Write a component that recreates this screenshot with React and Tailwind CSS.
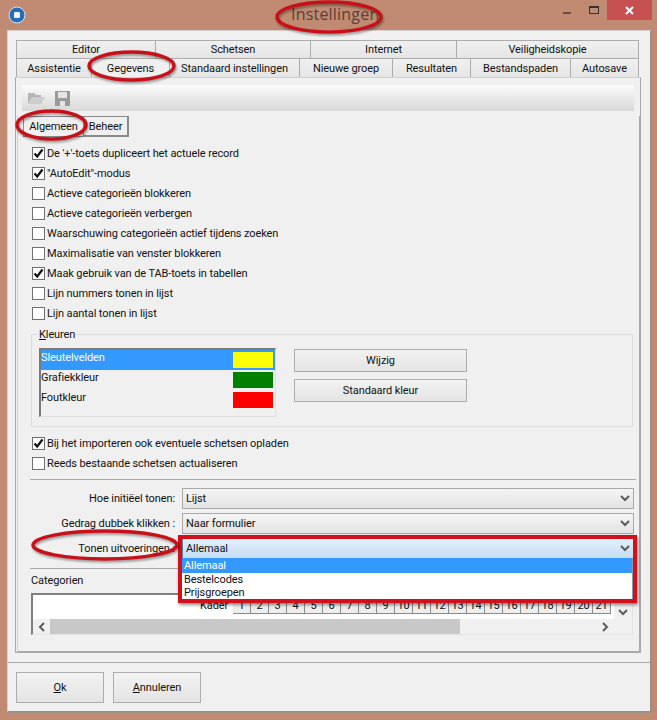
const topTabs = [
  { label: "Editor", w: "w-[140px]" },
  { label: "Schetsen", w: "w-[155px]" },
  { label: "Internet", w: "w-[146px]" },
  { label: "Veiligheidskopie", w: "w-[182px]" },
];

const bottomTabs = [
  { label: "Assistentie", w: "w-[76px]" },
  { label: "Gegevens", w: "w-[78px]", active: true },
  { label: "Standaard instellingen", w: "w-[130px]" },
  { label: "Nieuwe groep", w: "w-[93px]" },
  { label: "Resultaten", w: "w-[78px]" },
  { label: "Bestandspaden", w: "w-[100px]" },
  { label: "Autosave", w: "w-[68px]" },
];

const options = [
  { label: "De '+'-toets dupliceert het actuele record", checked: true },
  { label: '"AutoEdit"-modus', checked: true },
  { label: "Actieve categorieën blokkeren" },
  { label: "Actieve categorieën verbergen" },
  { label: "Waarschuwing categorieën actief tijdens zoeken" },
  { label: "Maximalisatie van venster blokkeren" },
  { label: "Maak gebruik van de TAB-toets in tabellen", checked: true },
  { label: "Lijn nummers tonen in lijst" },
  { label: "Lijn aantal tonen in lijst" },
];

const colors = [
  { label: "Sleutelvelden", swatch: "bg-[#ffff00]", selected: true },
  { label: "Grafiekkleur", swatch: "bg-[#008000]" },
  { label: "Foutkleur", swatch: "bg-[#ff0000]" },
];

const kaderCells = Array.from({ length: 21 }, (_, i) => i + 1);

const Chevron = ({ dir = "down" }) => {
  const points = {
    down: "1,2 5,6 9,2",
    left: "7,1 3,5 7,9",
    right: "3,1 7,5 3,9",
  };
  return (
    <svg width="10" height="10" viewBox="0 0 10 10" fill="none" className="shrink-0">
      <polyline points={points[dir]} stroke="#5c5c5c" strokeWidth="2" />
    </svg>
  );
};

const Check = ({ checked, label }) => (
  <div className="h-5 flex items-center gap-[2px]">
    <span className="w-[13px] h-[13px] border border-[#707070] bg-white flex items-center justify-center shrink-0">
      {checked && (
        <svg width="11" height="11" viewBox="0 0 11 11" fill="none">
          <polyline points="1.5,5.5 4.2,8.5 9.5,1.5" stroke="#111" strokeWidth="2.2" />
        </svg>
      )}
    </span>
    <span>{label}</span>
  </div>
);

const SelectRow = ({ label, value, hot }) => (
  <div className="h-[25px] flex items-start">
    <span className="w-[146px] h-5 pr-[1px] flex items-center justify-end whitespace-nowrap">{label}</span>
    <div
      className={`ml-[6px] w-[452px] h-[21px] border flex items-center justify-between pl-[3px] pr-[3px] ${
        hot
          ? "border-[#5f87ad] bg-gradient-to-b from-[#e3f0fb] to-[#c4dcf4]"
          : "border-[#a9a9a9] bg-gradient-to-b from-[#f4f4f4] to-[#e3e3e3]"
      }`}
    >
      <span>{value}</span>
      <Chevron />
    </div>
  </div>
);

const Oval = ({ className, vb }) => (
  <svg
    className={`absolute pointer-events-none drop-shadow-[1px_2px_1px_rgba(0,0,0,0.35)] ${className}`}
    viewBox={`0 0 ${vb[0]} ${vb[1]}`}
    fill="none"
  >
    <ellipse cx={vb[0] / 2} cy={vb[1] / 2} rx={vb[0] / 2 - 2} ry={vb[1] / 2 - 2} stroke="#c8101a" strokeWidth="3.5" />
  </svg>
);

const App = () => {
  return (
    <div className="relative w-[657px] h-[720px] overflow-hidden bg-[#c08b72] text-[11px] tracking-[-0.1px] leading-none text-[#111] font-['Roboto',Arial,sans-serif]">
      {/* title bar */}
      <div className="relative h-[30px] flex items-start">
        <svg width="18" height="18" viewBox="0 0 18 18" className="ml-[8px] mt-[6px]">
          <circle cx="9" cy="9" r="8" fill="#2a6db5" />
          <circle cx="9" cy="9" r="8" fill="none" stroke="#cfe3f5" strokeWidth="1" />
          <rect x="6" y="6" width="6" height="6" rx="1" fill="#eaf4ff" />
        </svg>
        <span className="absolute left-[291px] top-[5px] text-[16px] tracking-[0.2px] leading-[18px] text-[#5b4038] font-['Open_Sans',sans-serif]">
          Instellingen
        </span>
        <div className="ml-auto mr-[5px] flex items-start">
          <div className="w-[28px] h-[20px] flex items-center justify-center">
            <span className="w-[8px] h-[2px] mt-[6px] bg-[#6b5048]" />
          </div>
          <div className="w-[26px] h-[20px] flex items-center justify-center">
            <span className="w-[10px] h-[8px] border border-[#333] border-t-2" />
          </div>
          <div className="w-[45px] h-[20px] bg-[#c75050] flex items-center justify-center">
            <svg width="9" height="9" viewBox="0 0 9 9">
              <path d="M1 1 L8 8 M8 1 L1 8" stroke="#fff" strokeWidth="2" />
            </svg>
          </div>
        </div>
      </div>

      {/* window body */}
      <div className="ml-[7px] w-[645px] h-[683px] bg-[#f0f0f0] border-t border-l border-[#d8d0cc] border-r-2 border-b-2 border-r-[#9c8f88] border-b-[#9c8f88] flex flex-col">
        <div className="pl-[8px] pt-[9px]">
          <div className="flex h-[19px]">
            {topTabs.map((t) => (
              <div
                key={t.label}
                className={`${t.w} border border-[#acacac] border-l-0 first:border-l bg-gradient-to-b from-[#f0f0f0] to-[#e5e5e5] flex items-center justify-center`}
              >
                {t.label}
              </div>
            ))}
          </div>
          <div className="flex h-[19px]">
            {bottomTabs.map((t) => (
              <div
                key={t.label}
                className={`${t.w} border-r border-b border-[#acacac] first:border-l flex items-center justify-center ${
                  t.active ? "bg-[#f0f0f0] border-b-0" : "bg-gradient-to-b from-[#f0f0f0] to-[#e5e5e5] pt-[1px]"
                }`}
              >
                {t.label}
              </div>
            ))}
          </div>
        </div>

        {/* tab panel */}
        <div className="ml-[7px] w-[626px] h-[576px] -mt-[1px] border border-[#a9a9a9] border-t-[#d0d0d0] pt-[7px] flex flex-col">
          <div className="mx-[6px] h-[26px] shrink-0 bg-gradient-to-b from-[#fbfbfb] to-[#d8d8d8] flex items-center gap-[10px] pl-[5px]">
            <svg width="18" height="14" viewBox="0 0 18 14">
              <path d="M1 2 H7 L9 4 H14 V6 H5 L1 13 Z" fill="#b4b4b4" />
              <path d="M5 6 H18 L14 13 H1 Z" fill="#cdcdcd" />
            </svg>
            <svg width="15" height="15" viewBox="0 0 15 15">
              <rect width="15" height="15" fill="#9a9a9a" />
              <rect x="3" y="1" width="9" height="6" fill="#e4e4e4" />
              <rect x="5" y="10" width="5" height="5" fill="#e4e4e4" />
            </svg>
          </div>

          <div className="ml-[1px] mt-[5px] w-[623px] flex-1 border-r border-b border-l border-[#a9a9a9] border-l-[#d0d0d0] flex flex-col">
            <div className="flex h-[21px] pl-[5px] shrink-0">
              <div className="w-[61px] h-[21px] border border-[#8a8a8a] bg-[#f0f0f0] flex items-center justify-center">
                Algemeen
              </div>
              <div className="w-[45px] h-[21px] border border-l-0 border-[#8a8a8a] border-b-2 border-r-2 bg-[#f0f0f0] flex items-center justify-center">
                Beheer
              </div>
            </div>

            <div className="pl-[14px] pt-[6px]">
              {options.map((o) => (
                <Check key={o.label} label={o.label} checked={o.checked} />
              ))}
            </div>

            {/* kleuren group */}
            <div className="relative ml-[13px] mt-[11px] w-[602px] h-[93px] border border-[#dcdcdc] pt-[13px] pl-[7px] flex items-start">
              <span className="absolute left-[6px] -top-[6px] bg-[#f0f0f0] px-[1px]">
                <span className="underline">K</span>leuren
              </span>
              <div className="w-[237px] h-[69px] border-l-2 border-t-2 border-[#7a7a7a] border-r border-b border-r-[#e0e0e0] border-b-[#e0e0e0]">
                {colors.map((c) => (
                  <div
                    key={c.label}
                    className={`h-[20px] flex items-center justify-between pr-[2px] ${
                      c.selected ? "bg-[#3399ff] text-white" : ""
                    }`}
                  >
                    <span className="mb-[5px]">{c.label}</span>
                    <span className={`w-[40px] h-[16px] ${c.swatch}`} />
                  </div>
                ))}
              </div>
              <div className="ml-[18px] mt-[1px] flex flex-col gap-[7px]">
                {["Wijzig", "Standaard kleur"].map((b) => (
                  <div
                    key={b}
                    className="w-[173px] h-[23px] border border-[#acacac] bg-gradient-to-b from-[#f2f2f2] to-[#e4e4e4] flex items-center justify-center"
                  >
                    {b}
                  </div>
                ))}
              </div>
            </div>

            <div className="pl-[14px] pt-[6px]">
              <Check label="Bij het importeren ook eventuele schetsen opladen" checked />
              <Check label="Reeds bestaande schetsen actualiseren" />
            </div>

            <div className="ml-[12px] mt-[6px] w-[606px] border-t border-[#a9a9a9]" />

            <div className="pl-[12px] pt-[8px]">
              <SelectRow label="Hoe initiëel tonen:" value="Lijst" />
              <SelectRow label="Gedrag dubbek klikken :" value="Naar formulier" />
              <SelectRow label="Tonen uitvoeringen :" value="Allemaal" hot />
            </div>

            <div className="ml-[12px] mt-[5px] w-[606px] border-t border-[#a9a9a9]" />
            <div className="pl-[13px] pt-[6px]">Categorien</div>

            {/* categorien box */}
            <div className="ml-[13px] mt-[7px] w-[602px] h-[42px] border-l-2 border-t-2 border-[#7f7f7f] border-r border-b border-r-[#e4e4e4] border-b-[#e4e4e4] flex flex-col overflow-hidden">
              <div className="h-[24px] flex shrink-0">
                <div className="w-[581px] bg-white flex items-start pl-[167px] pt-[2px] gap-[5px]">
                  <span className="w-[28px] h-[17px] flex items-center">Kader</span>
                  <div className="flex">
                    {kaderCells.map((n) => (
                      <span
                        key={n}
                        className="w-[18px] h-[17px] border-r border-b border-[#8a8a8a] bg-[#eeeeee] flex items-center justify-center"
                      >
                        {n}
                      </span>
                    ))}
                  </div>
                </div>
                <div className="flex-1 flex items-end justify-center pb-[1px]">
                  <Chevron />
                </div>
              </div>
              <div className="flex-1 flex items-center pl-[4px]">
                <Chevron dir="left" />
                <div className="ml-[3px] w-[410px] h-full bg-[#c8c8c8]" />
                <div className="ml-[140px]">
                  <Chevron dir="right" />
                </div>
              </div>
            </div>
          </div>
        </div>

        {/* footer */}
        <div className="mt-[9px] border-t border-[#a9a9a9] pl-[8px] pt-[9px] flex gap-[9px]">
          <div className="w-[88px] h-[31px] border border-[#acacac] bg-gradient-to-b from-[#f2f2f2] to-[#e4e4e4] flex items-center justify-center">
            <span><span className="underline">O</span>k</span>
          </div>
          <div className="w-[88px] h-[31px] border border-[#acacac] bg-gradient-to-b from-[#f2f2f2] to-[#e4e4e4] flex items-center justify-center">
            <span><span className="underline">A</span>nnuleren</span>
          </div>
        </div>
      </div>

      {/* open dropdown */}
      <div className="absolute left-[181px] top-[558px] w-[452px] h-[42px] bg-white border border-[#7f9db9] border-t-0">
        <div className="h-[15px] bg-[#3399ff] text-white pl-[2px] flex items-center">Allemaal</div>
        <div className="h-[13px] pl-[2px] flex items-center">Bestelcodes</div>
        <div className="h-[13px] pl-[2px] flex items-center">Prijsgroepen</div>
      </div>

      {/* red annotations */}
      <div className="absolute left-[178px] top-[535px] w-[459px] h-[68px] border-4 border-[#d2101c] shadow-[1px_2px_3px_rgba(0,0,0,0.45)] pointer-events-none" />
      <Oval className="left-[275px] top-0 w-[108px] h-[34px]" vb={[108, 34]} />
      <Oval className="left-[87px] top-[50px] w-[89px] h-[32px]" vb={[89, 32]} />
      <Oval className="left-[15px] top-[109px] w-[73px] h-[32px]" vb={[73, 32]} />
      <Oval className="left-[31px] top-[529px] w-[148px] h-[32px]" vb={[148, 32]} />
    </div>
  );
};

export default App;
